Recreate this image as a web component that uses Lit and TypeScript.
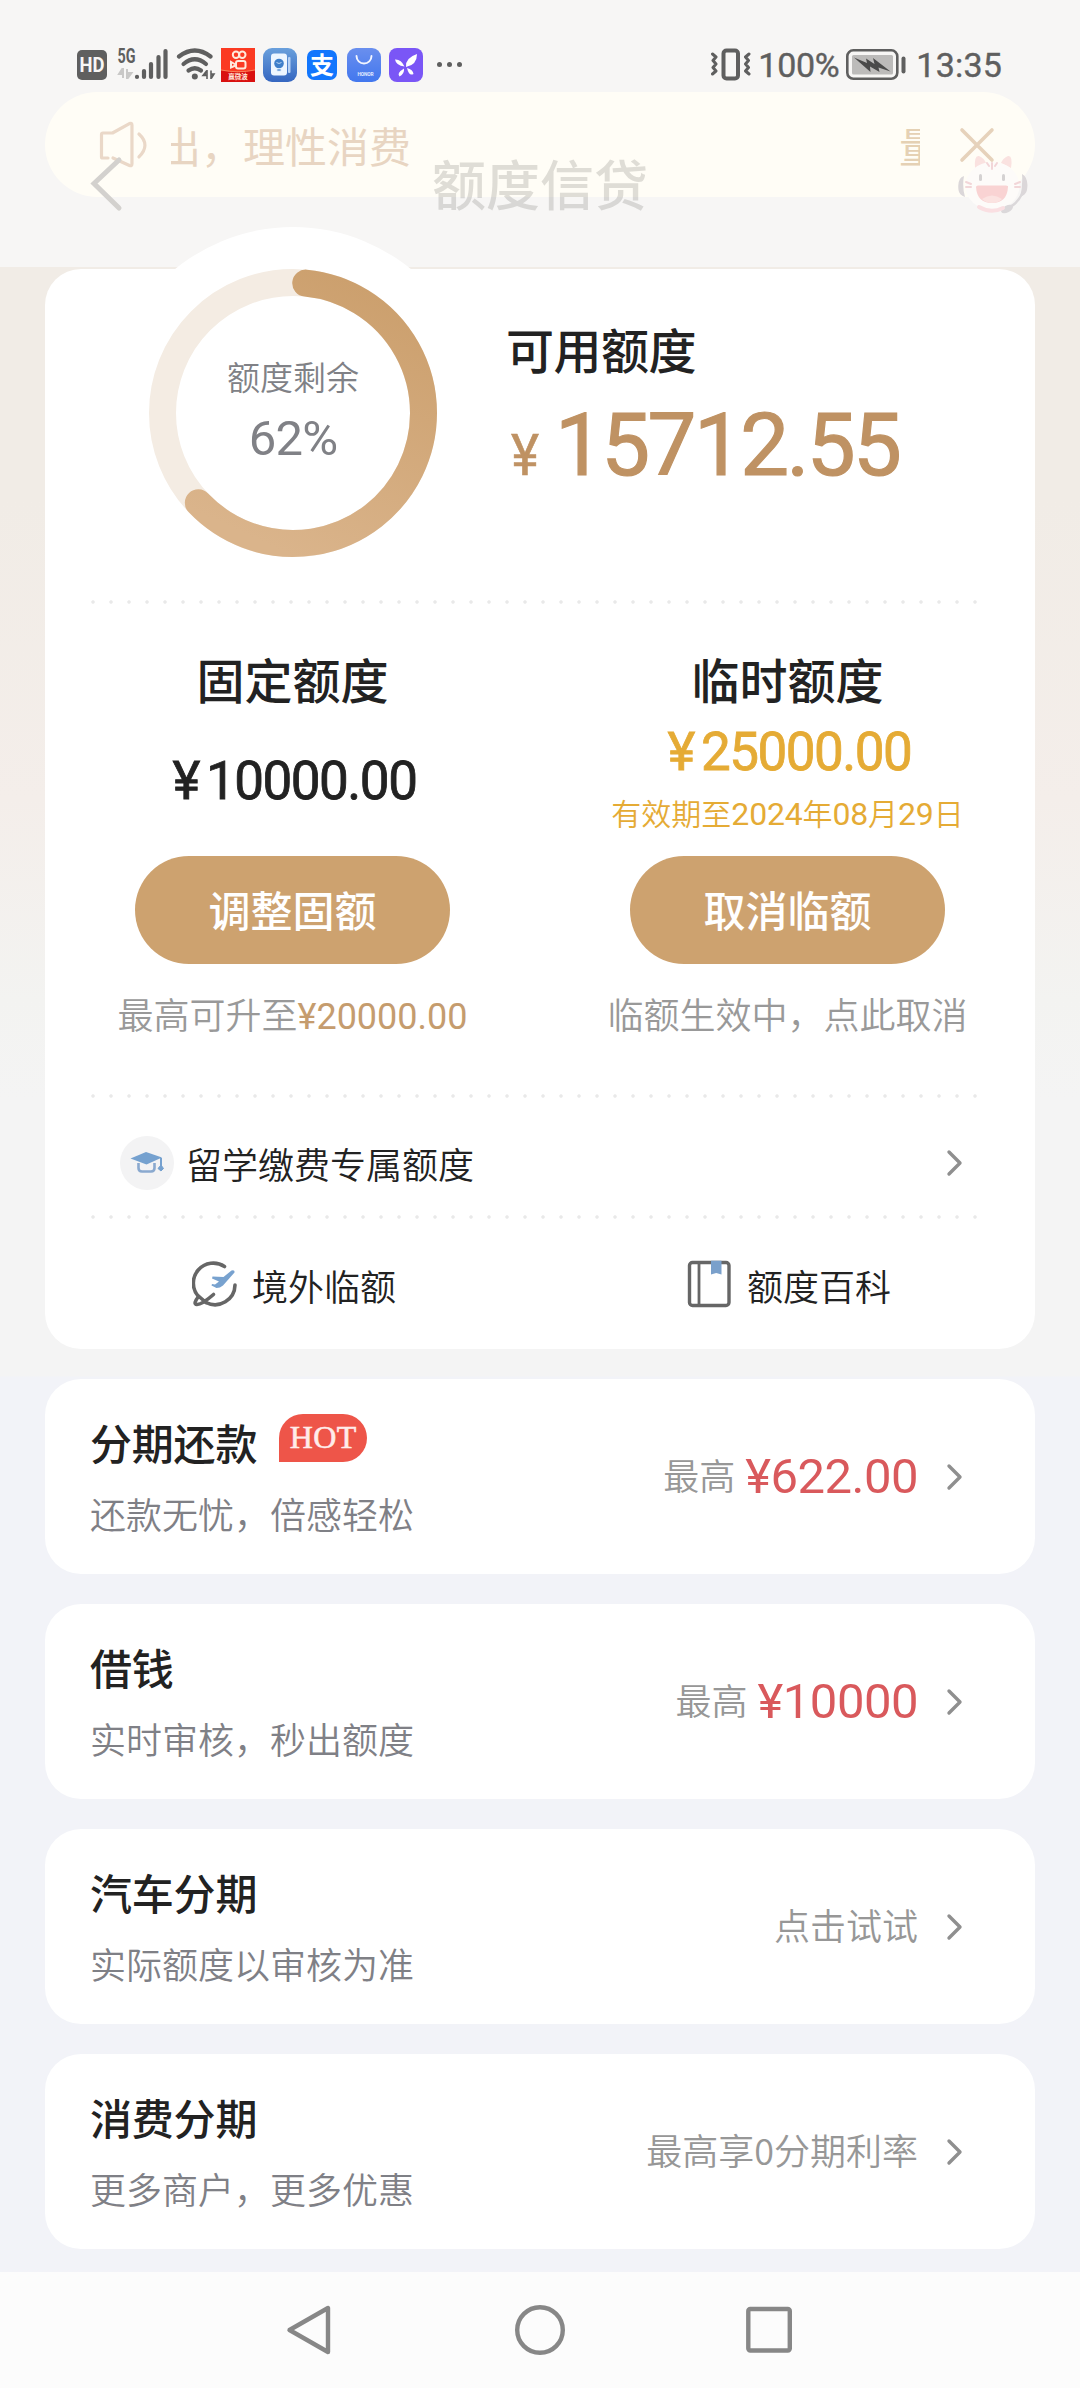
import { LitElement, html, svg, css, nothing } from "lit";
import { customElement, property } from "lit/decorators.js";

const chevron = html`<svg class="chevron" width="18" height="30" viewBox="0 0 18 30">
  <path d="M3 4 L14 15 L3 26" fill="none" stroke="#8f8f8f" stroke-width="3.4" stroke-linecap="round" stroke-linejoin="round" />
</svg>`;

@customElement("status-bar")
class StatusBar extends LitElement {
  static styles = css`
    :host {
      display: flex;
      height: 34px;
      padding: 48px 78px 0 77px;
      align-items: center;
      justify-content: space-between;
      font-family: Roboto, sans-serif;
      color: #5f5f5f;
    }
    .left, .right { display: flex; align-items: center; height: 34px; }
    .right { font-size: 34px; line-height: 34px; letter-spacing: 0.2px; -webkit-text-stroke: 0.4px #5f5f5f; }
    .pct { margin-left: 7px; width: 80px; letter-spacing: -0.3px; }
    .time { margin-left: 9px; }
    .battery { margin-left: 7px; }
    svg { display: block; }
  `;
  render() {
    return html`
      <div class="left">
        <svg width="385" height="34" viewBox="77 48 385 34">
          <rect x="77" y="50" width="30" height="30" rx="5" fill="#5f5f5f" />
          <text x="92" y="72" text-anchor="middle" font-family="Roboto" font-weight="700" font-size="19.500" fill="#f7f6f5" textLength="25" lengthAdjust="spacingAndGlyphs">HD</text>
          <text x="117.500" y="62.500" font-family="Roboto" font-weight="700" font-size="19.500" fill="#5f5f5f" textLength="18" lengthAdjust="spacingAndGlyphs">5G</text>
          <path d="M123 68 V78 M122.5 68.5 L119 74 H122.5 M127 69 V79 M127.5 78.5 L131.5 73 H127.5" fill="#c9c8c7" stroke="#c9c8c7" stroke-width="2" />
          <g stroke="#5f5f5f" stroke-width="4.2" stroke-linecap="round">
            <path d="M137 76.8 V77 M144 71 V77 M151 64 V77 M158.500 57 V77 M165.500 51 V77" />
          </g>
          <g fill="none" stroke="#5f5f5f" stroke-width="4.2" stroke-linecap="round">
            <path d="M179 56.500 Q194.800 44.500 210.500 56.500" />
            <path d="M183.500 64 Q194.800 54.500 206 64" />
            <path d="M188.500 70.500 Q194.800 66 201 70.500" />
          </g>
          <circle cx="194.800" cy="76.500" r="3" fill="#5f5f5f" />
          <path d="M207 70 V79 M206.500 71 L203 75.500 H206.500 M211 70.500 V79 M211.500 78 L214 74 H211.500" fill="#5f5f5f" stroke="#5f5f5f" stroke-width="1.600" />

          <rect x="221" y="48" width="34" height="34" fill="#fb3a22" />
          <path d="M221 70 Q238 73.500 255 70 V82 H221 Z" fill="#d9100f" />
          <path d="M221 70 Q238 73.500 255 70" fill="none" stroke="#ff9a6a" stroke-width="0.800" />
          <g fill="none" stroke="#ffeadb" stroke-width="2">
            <circle cx="236" cy="54.800" r="3.200" />
            <circle cx="242.300" cy="54.800" r="3.200" />
            <rect x="236" y="61" width="9.500" height="7.500" rx="2" />
            <path d="M235.500 64.500 L231 62 V67.500 L235.500 65.500" />
          </g>
          <text x="238" y="79.300" text-anchor="middle" font-family="Noto Sans CJK SC" font-weight="700" font-size="6.500" fill="#ffe9dc">赢微波</text>

          <linearGradient id="g1" x1="0" y1="0" x2="0" y2="1"><stop offset="0" stop-color="#6aa0dc" /><stop offset="1" stop-color="#3566c0" /></linearGradient>
          <rect x="263" y="48" width="34" height="34" rx="9" fill="url(#g1)" />
          <rect x="271" y="53.500" width="16" height="22" rx="3" fill="#eef6ff" />
          <rect x="288" y="57" width="2.500" height="16" rx="1" fill="#b7d2f5" />
          <circle cx="279" cy="63.500" r="4.800" fill="#3f7fca" />
          <path d="M277 69 h4 v2 h-4 z M276.500 62.500 q2.500 2 5 0" fill="#3f7fca" stroke="#d8e8fa" stroke-width="0.800" />

          <rect x="307" y="50" width="30" height="30" rx="7" fill="#1276fd" />
          <text x="322" y="73.500" text-anchor="middle" font-family="Noto Sans CJK SC" font-weight="700" font-size="24" fill="#fff">支</text>

          <linearGradient id="g2" x1="0" y1="0" x2="0" y2="1"><stop offset="0" stop-color="#6a8fee" /><stop offset="1" stop-color="#4277ee" /></linearGradient>
          <rect x="347" y="48" width="34" height="34" rx="9" fill="url(#g2)" />
          <path d="M356.500 56 a7.500 7.500 0 0 0 15 0" fill="none" stroke="#f3f6ff" stroke-width="1.900" stroke-linecap="round" />
          <text x="365.500" y="76" text-anchor="middle" font-family="Roboto" font-weight="700" font-size="4.800" fill="#e3ecff" textLength="16">HONOR</text>

          <rect x="389" y="48" width="34" height="34" rx="8" fill="#7a56f6" />
          <g fill="#fff">
            <path d="M406 67 Q405 58 417 54 Q417 65 406 67 Z" />
            <path d="M404.500 66.500 Q396 65.500 395 59.500 Q401 59 404.500 66.500 Z" />
            <path d="M404 68.500 Q404.500 74 399.500 76.500 Q396.500 73 404 68.500 Z" />
            <path d="M407 68 Q413 69.500 413.500 74 Q409 76.500 407 68 Z" />
          </g>
          <g fill="#5f5f5f"><circle cx="439.500" cy="64.500" r="2.500" /><circle cx="449.500" cy="64.500" r="2.500" /><circle cx="459.500" cy="64.500" r="2.500" /></g>
        </svg>
      </div>
      <div class="right">
        <svg width="41" height="34" viewBox="711 48 41 34">
          <rect x="724.500" y="50.500" width="14.500" height="28" rx="3" fill="none" stroke="#5f5f5f" stroke-width="4" />
          <path d="M713.500 54 l3.500 3 l-3 3.500 l3 3.500 l-3 3.500 l3 3.500 l-3.500 3 M750 54 l-3.500 3 l3 3.500 l-3 3.500 l3 3.500 l-3 3.500 l3.500 3" fill="none" stroke="#5f5f5f" stroke-width="3" stroke-linejoin="round" stroke-linecap="round" />
        </svg>
        <span class="pct">100%</span>
        <svg class="battery" width="62" height="34" viewBox="848 48 62 34">
          <rect x="850.300" y="50.300" width="50" height="28.500" rx="6" fill="none" stroke="#5f5f5f" stroke-width="2.600" />
          <rect x="855" y="55" width="41" height="19.500" rx="1.500" fill="#bcbbba" />
          <path d="M857 57.500 L870 63 L869 58.500 L877.500 64 L876 58 L893.500 71.500 L881.500 67.500 L882.500 72 L873 66.500 L873.500 72 Z" fill="#4a4a4a" />
          <rect x="904.500" y="56.500" width="4" height="17" rx="2" fill="#5f5f5f" />
        </svg>
        <span class="time">13:35</span>
      </div>
    `;
  }
}

@customElement("app-header")
class AppHeader extends LitElement {
  static styles = css`
    :host {
      display: block;
      position: relative;
      height: 267px;
      background: #f7f6f5;
      font-family: "Noto Sans CJK SC", sans-serif;
    }
    .notice {
      display: flex;
      align-items: center;
      box-sizing: border-box;
      height: 105px;
      margin: 10px 45px 0;
      padding: 0 40px 0 54px;
      border-radius: 53px;
      background: #fffdf6;
      color: #e8d5c2;
    }
    .ticker {
      display: flex;
      justify-content: space-between;
      overflow: hidden;
      width: 750px;
      margin-left: 24px;
      font-size: 42px;
      line-height: 60px;
      white-space: nowrap;
    }
    .out { margin-left: -12px; }
    .in { margin-right: -21px; color: #e5d1b4; }
    .close { margin-left: 39px; }
    .bar {
      position: absolute;
      left: 0;
      right: 0;
      top: 147px;
      height: 76px;
      display: flex;
      align-items: center;
      justify-content: center;
      font-size: 54px;
      line-height: 76px;
      color: rgba(80, 78, 74, 0.18);
    }
    .title { font-weight: 500; padding-bottom: 4px; }
    .back { position: absolute; left: 88px; top: 8px; }
    .mascot { position: absolute; left: 956px; top: 4px; }
  `;
  render() {
    return html`
      <status-bar></status-bar>
      <div class="notice">
        <svg width="48" height="48" viewBox="0 0 48 48" fill="none" stroke="#ead8c8" stroke-width="3.200" stroke-linecap="round" stroke-linejoin="round">
          <path d="M9 37 H3.500 Q2.500 37 2.500 36 V13.500 Q2.500 12 4 12 H13.500 L30.500 2.500 Q33 1.500 33 4 V43 Q33 45.500 30.500 44.500 L14 37" />
          <path d="M40 13 Q52 24 40 36" />
        </svg>
        <div class="ticker"><span class="out">出，理性消费</span><span class="in">量</span></div>
        <svg class="close" width="36" height="36" viewBox="0 0 36 36"><path d="M3 3 L33 33 M33 3 L3 33" stroke="#e6d2bb" stroke-width="3.600" stroke-linecap="round" /></svg>
      </div>
      <div class="bar">
        <svg class="back" width="36" height="58" viewBox="0 0 36 58"><path d="M31 5 L6 28.500 L31 53" fill="none" stroke="#d3d1ce" stroke-width="5" stroke-linecap="round" /></svg>
        <span class="title">额度信贷</span>
        <svg class="mascot" width="74" height="66" viewBox="956 151 74 66">
          <path d="M975 168 Q974 155 979 156 Q984 158 986 163 Z M1011 168 Q1013 155 1008 156 Q1003 158 1001 163 Z" fill="#fae2e0" />
          <ellipse cx="992.500" cy="186" rx="27" ry="24" fill="#fdfbf9" />
          <path d="M964 176 Q957 178 958.500 190 Q959 195 965 197 Q962 186 964 176 Z M1022 174 Q1029 178 1027 190 Q1026 195 1020 197 Q1023 186 1022 174 Z" fill="#dbd7d9" />
          <path d="M1022 194 Q1016 206 1005 209" fill="none" stroke="#dbd8da" stroke-width="2.400" />
          <ellipse cx="1007" cy="209" rx="6.500" ry="3.500" transform="rotate(-28 1007 209)" fill="#dbd8da" />
          <path d="M979 207 Q991 214 1003 208" fill="none" stroke="#fadfe2" stroke-width="4" stroke-linecap="round" />
          <rect x="979" y="174" width="3" height="7" rx="1.500" fill="#d5d2d2" />
          <rect x="1002" y="174" width="3" height="7" rx="1.500" fill="#d5d2d2" />
          <path d="M976 187 Q976 185.500 978 185.500 H1006 Q1008.500 185.500 1008 187 Q1007 203 992 203 Q977 203 976 187 Z" fill="#f9d3d3" />
          <path d="M982 199 Q992 192 1002 199 Q998 203 992 203 Q986 203 982 199 Z" fill="#fbe3e1" />
          <path d="M987 163 l2 3 M997 163 l-2 3 M992 163 v6 M966 182 l5 2 M966 187 h5 M1020 182 l-5 2 M1020 187 h-5" stroke="#f2d6d8" stroke-width="2" stroke-linecap="round" />
        </svg>
      </div>
    `;
  }
}

@customElement("quota-gauge")
class QuotaGauge extends LitElement {
  @property({ type: Number }) percent = 62;
  static styles = css`
    :host {
      display: grid;
      place-items: center;
      width: 372px;
      height: 372px;
      border-radius: 50%;
      background: #fff;
      flex: none;
    }
    svg, .text { grid-area: 1 / 1; }
    .text {
      display: flex;
      flex-direction: column;
      align-items: center;
      color: #808186;
      padding-bottom: 4px;
    }
    .label { font: 350 33px/48px "Noto Sans CJK SC", sans-serif; }
    .value { font: 400 49px/62px Roboto, sans-serif; margin-top: 8px; letter-spacing: -0.8px; }
  `;
  render() {
    const r = 130.5;
    const at = (deg: number) => {
      const a = (deg * Math.PI) / 180;
      return `${186 + r * Math.sin(a)} ${186 - r * Math.cos(a)}`;
    };
    const end = (this.percent / 100) * 360 + 3.3;
    return html`
      <svg width="372" height="372" viewBox="0 0 372 372">
        <defs>
          <linearGradient id="arc" x1="0.700" y1="0" x2="0.300" y2="1"><stop offset="0" stop-color="#cca06e" /><stop offset="1" stop-color="#dab48b" /></linearGradient>
        </defs>
        <circle cx="186" cy="186" r=${r} fill="none" stroke="#f4ece3" stroke-width="27" />
        <path d="M ${at(5.6)} A ${r} ${r} 0 ${end > 180 ? 1 : 0} 1 ${at(end)}" fill="none" stroke="url(#arc)" stroke-width="27" stroke-linecap="round" />
      </svg>
      <div class="text"><span class="label">额度剩余</span><span class="value">${this.percent}%</span></div>
    `;
  }
}

@customElement("quota-card")
class QuotaCard extends LitElement {
  static styles = css`
    :host {
      display: block;
      box-sizing: border-box;
      height: 1080px;
      margin: 2px 45px 0;
      border-radius: 36px;
      background: #fff;
      position: relative;
      color: #222;
      font-family: "Noto Sans CJK SC", sans-serif;
    }
    .top { display: flex; height: 331px; }
    quota-gauge { margin: -42px 0 0 62px; }
    .avail { margin-left: 27px; padding-top: 44px; }
    .h { font-size: 48px; line-height: 70px; font-weight: 500; letter-spacing: -0.5px; }
    .big { display: flex; align-items: baseline; color: #bf9263; font-family: Roboto, sans-serif; font-weight: 400; line-height: 100px; margin-top: 12px; -webkit-text-stroke: 1.2px #bf9263; }
    .yen { font-size: 58px; width: 44px; padding-left: 5px; transform: scaleX(0.920); transform-origin: 6px 50%; -webkit-text-stroke: 0.6px #bf9263; }
    .num { font-size: 87px; letter-spacing: -2.600px; }
    .dots {
      height: 4px;
      margin: 0 51px 0 39px;
      background: radial-gradient(circle at 9px 2px, #e9e9e9 1.300px, rgba(255, 255, 255, 0) 2.200px) 0 0 / 18px 4px repeat-x;
    }
    .quotas { display: grid; grid-template-columns: 1fr 1fr; height: 490px; }
    .q { display: flex; flex-direction: column; align-items: center; padding-top: 44px; }
    .q .h { line-height: 60px; letter-spacing: 0; }
    .mid { height: 148px; display: flex; flex-direction: column; align-items: center; box-sizing: border-box; }
    .amt { font: 400 53px/60px Roboto, sans-serif; letter-spacing: -1.500px; margin-left: 4px; -webkit-text-stroke: 0.8px currentColor; }
    .amt i { font-style: normal; margin-right: 7px; }
    .fixed .mid { padding-top: 43px; }
    .temp .mid { padding-top: 14px; color: #e5ab35; }
    .valid { font-family: Roboto, "Noto Sans CJK SC", sans-serif; font-size: 30px; line-height: 44px; font-weight: 350; margin-top: 10px; white-space: nowrap; }
    .valid b { font-size: 32px; font-weight: 400; letter-spacing: -0.200px; }
    .btn {
      width: 315px;
      height: 108px;
      border: 0;
      padding: 0 0 2px;
      border-radius: 54px;
      background: #cda26f;
      color: #fff;
      font: 500 42px/60px "Noto Sans CJK SC", sans-serif;
    }
    .tip { margin-top: 24px; font-size: 36px; line-height: 50px; font-weight: 350; color: #999; white-space: nowrap; }
    .tip b { font-family: Roboto, sans-serif; font-weight: 400; color: #c59c6e; }
    .study { display: flex; align-items: center; box-sizing: border-box; height: 117px; padding: 13px 71px 0 75px; font-size: 36px; line-height: 50px; }
    .badge { width: 54px; height: 54px; border-radius: 50%; background: #f3f3f4; display: grid; place-items: center; margin-right: 12px; }
    .study .name { flex: 1; }
    .links { display: grid; grid-template-columns: 1fr 1fr; height: 130px; }
    .link { display: flex; align-items: center; justify-content: center; font-size: 36px; line-height: 50px; padding-left: 3px; }
    .link span { padding-top: 1px; }
    .link svg { margin-right: 14px; }
    .name, .link { font-weight: 350; }
  `;
  render() {
    return html`
      <div class="top">
        <quota-gauge .percent=${62}></quota-gauge>
        <div class="avail">
          <div class="h">可用额度</div>
          <div class="big"><span class="yen">¥</span><span class="num">15712.55</span></div>
        </div>
      </div>
      <div class="dots"></div>
      <div class="quotas">
        <div class="q fixed">
          <div class="h">固定额度</div>
          <div class="mid"><div class="amt"><i>¥</i>10000.00</div></div>
          <button class="btn">调整固额</button>
          <div class="tip">最高可升至<b>¥20000.00</b></div>
        </div>
        <div class="q temp">
          <div class="h">临时额度</div>
          <div class="mid">
            <div class="amt"><i>¥</i>25000.00</div>
            <div class="valid">有效期至<b>2024</b>年<b>08</b>月<b>29</b>日</div>
          </div>
          <button class="btn">取消临额</button>
          <div class="tip">临额生效中，点此取消</div>
        </div>
      </div>
      <div class="dots"></div>
      <div class="study">
        <span class="badge">
          <svg width="36" height="24" viewBox="0 0 36 24">
            <path d="M1.500 7.500 L17 1 L33 6.500 L17.500 13.500 Z" fill="#75a1cf" />
            <path d="M9.500 12 V17 Q9.500 20.500 13 20.500 H22 Q25.500 20.500 25.500 17 V12" fill="none" stroke="#8aa9cf" stroke-width="2.600" />
            <path d="M32 7 V16" stroke="#75a1cf" stroke-width="2" />
            <path d="M32 14 L34.500 17.500 L32 20 L29 17.500 Z" fill="#75a1cf" stroke="#75a1cf" stroke-linejoin="round" />
          </svg>
        </span>
        <span class="name">留学缴费专属额度</span>
        ${chevron}
      </div>
      <div class="dots"></div>
      <div class="links">
        <div class="link">
          <svg width="46" height="46" viewBox="0 0 46 46">
            <g fill="none" stroke="#666" stroke-width="3.600" stroke-linecap="round">
              <path d="M32.500 5.500 A20 20 0 0 0 6.500 35.500" />
              <path d="M43 24 A20 20 0 0 1 14 41.500" />
              <path d="M6.500 35.500 Q0.500 43 5 43.500 Q10 43.500 21.500 33.500 M7 35.500 L14 41.500" />
            </g>
            <path d="M42.500 11.500 Q43 8.500 39.500 9.500 L31.500 16 L20.500 15.500 L20 17.500 L27 20.500 L23 23.500 L20 23 L19.500 24.500 L24.500 27 Q28 27 31 24.500 Z" fill="#78a2cf" />
          </svg>
          <span>境外临额</span>
        </div>
        <div class="link">
          <svg width="46" height="48" viewBox="0 0 46 48">
            <rect x="2.500" y="2.500" width="39.500" height="43" rx="3" fill="none" stroke="#666" stroke-width="3.400" />
            <path d="M12 3 V45" stroke="#666" stroke-width="2.800" />
            <path d="M24 0.800 H34.500 V14.500 L29.200 13 L24 14.500 Z" fill="#7aa0cb" />
          </svg>
          <span>额度百科</span>
        </div>
      </div>
    `;
  }
}

@customElement("service-row")
class ServiceRow extends LitElement {
  @property() name = "";
  @property() desc = "";
  @property() tag = "";
  @property() hint = "";
  @property() amount = "";
  static styles = css`
    :host {
      display: flex;
      align-items: center;
      justify-content: space-between;
      box-sizing: border-box;
      height: 195px;
      padding: 0 71px 0 45px;
      border-radius: 36px;
      background: #fff;
      font-family: "Noto Sans CJK SC", sans-serif;
    }
    .left { display: flex; flex-direction: column; padding-bottom: 3px; }
    .title { display: flex; height: 62px; font-size: 42px; line-height: 62px; font-weight: 500; color: #222; letter-spacing: -0.200px; }
    .tag {
      width: 88px;
      height: 48px;
      margin: 3px 0 0 22px;
      border-radius: 24px 24px 24px 0;
      background: #ee5549;
      color: #ffecea;
      font: 400 32px/47px "Liberation Serif", serif;
      letter-spacing: 0.300px;
      -webkit-text-stroke: 0.6px #ffecea;
      text-align: center;
    }
    .desc { margin-top: 14px; font-size: 36px; line-height: 52px; font-weight: 350; color: #7f8086; }
    .right { display: flex; align-items: center; font-size: 36px; line-height: 52px; font-weight: 350; color: #979797; }
    .hint { padding-bottom: 5px; }
    .amount { margin-left: 10px; font: 400 49px/60px Roboto, sans-serif; letter-spacing: -0.500px; color: #d9595c; }
    .chevron { margin-left: 28px; }
  `;
  render() {
    return html`
      <div class="left">
        <div class="title">${this.name}${this.tag ? html`<span class="tag">${this.tag}</span>` : nothing}</div>
        <div class="desc">${this.desc}</div>
      </div>
      <div class="right">
        <span class="hint">${this.hint}</span>${this.amount ? html`<span class="amount">${this.amount}</span>` : nothing}${chevron}
      </div>
    `;
  }
}

const services = [
  { name: "分期还款", desc: "还款无忧，倍感轻松", tag: "HOT", hint: "最高", amount: "¥622.00" },
  { name: "借钱", desc: "实时审核，秒出额度", tag: "", hint: "最高", amount: "¥10000" },
  { name: "汽车分期", desc: "实际额度以审核为准", tag: "", hint: "点击试试", amount: "" },
  { name: "消费分期", desc: "更多商户，更多优惠", tag: "", hint: "最高享0分期利率", amount: "" },
];

@customElement("app-root")
class AppRoot extends LitElement {
  static styles = css`
    :host {
      display: flex;
      flex-direction: column;
      box-sizing: border-box;
      height: 2388px;
      overflow: hidden;
      background: linear-gradient(#f1ece6 0, #f1ece6 500px, #f4eeea 800px, #f3f3f1 1000px, #f4f4f4 1100px, #f4f4f4 1376px, #f2f3f8 1377px);
    }
    .list { display: flex; flex-direction: column; gap: 30px; margin: 30px 45px 23px; }
    .nav { flex: 1; background: #fcfcfc; display: flex; justify-content: center; align-items: center; padding-bottom: 1px; }
    .nav svg { display: block; }
  `;
  render() {
    return html`
      <app-header></app-header>
      <quota-card></quota-card>
      <div class="list">
        ${services.map(
          (s) => html`<service-row .name=${s.name} .desc=${s.desc} .tag=${s.tag} .hint=${s.hint} .amount=${s.amount}></service-row>`
        )}
      </div>
      <div class="nav">
        <svg width="520" height="56" viewBox="280 2302 520 56">
          ${svg`<g fill="none" stroke="#878787" stroke-width="4.400" stroke-linejoin="round">
            <path d="M328 2308 V2352 L289.500 2330 Z" />
            <circle cx="540" cy="2330" r="22.800" />
            <rect x="748.300" y="2309" width="41.500" height="41.500" rx="2" />
          </g>`}
        </svg>
      </div>
    `;
  }
}
